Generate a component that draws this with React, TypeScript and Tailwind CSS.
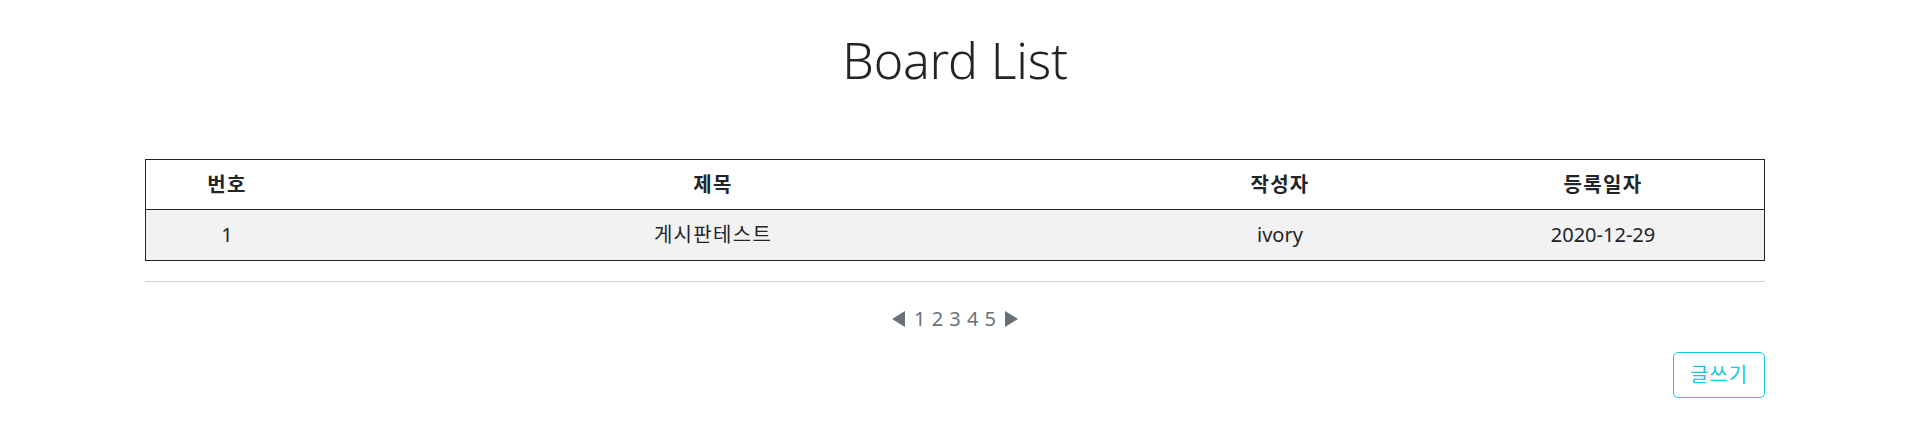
const rows = [
  { no: 1, title: '게시판테스트', writer: 'ivory', date: '2020-12-29' },
];

const cols = 'grid grid-cols-[162px_810px_324px_1fr] items-center text-center';

function Arrow({ dir }: { dir: 'left' | 'right' }) {
  return (
    <svg width="13" height="16" viewBox="0 0 13 16" className="fill-[#68717a]">
      {dir === 'left' ? <polygon points="13,0 13,16 0,8" /> : <polygon points="0,0 0,16 13,8" />}
    </svg>
  );
}

export default function App() {
  return (
    <div
      className="min-h-[424px] bg-white text-[#212529]"
      style={{ fontFamily: '"Noto Sans", "Noto Sans CJK KR", sans-serif' }}
    >
      <div className="ml-[145px] w-[1620px] pt-[30px]">
        <h1 className="h-[60px] text-center text-[50px] leading-[60px] font-light tracking-[-0.2px]">
          Board List
        </h1>

        <div className="mt-[69px] border border-[#212529] text-[20px]">
          <div className={`${cols} h-[50px] border-b border-[#212529] font-bold tracking-[1.3px]`}>
            <div>번호</div>
            <div>제목</div>
            <div>작성자</div>
            <div>등록일자</div>
          </div>
          {rows.map((r) => (
            <div key={r.no} className={`${cols} h-[50px] bg-[#f2f2f2]`}>
              <div>{r.no}</div>
              <div className="tracking-[1.3px]">{r.title}</div>
              <div>{r.writer}</div>
              <div>{r.date}</div>
            </div>
          ))}
        </div>

        <div className="mt-[20px] h-px bg-[#d0d0d0]" />

        <div className="mt-[22px] flex h-[30px] items-center justify-center gap-[9px] text-[20px] text-[#68717a]">
          <Arrow dir="left" />
          <span className="leading-[30px] [word-spacing:1px]">1 2 3 4 5</span>
          <Arrow dir="right" />
        </div>

        <div className="mt-[18px] flex justify-end">
          <button className="h-[46px] w-[92px] rounded-[5px] border border-[#17c9e6] text-[20px] tracking-[1px] text-[#17c9e6]">
            글쓰기
          </button>
        </div>
      </div>
    </div>
  );
}
